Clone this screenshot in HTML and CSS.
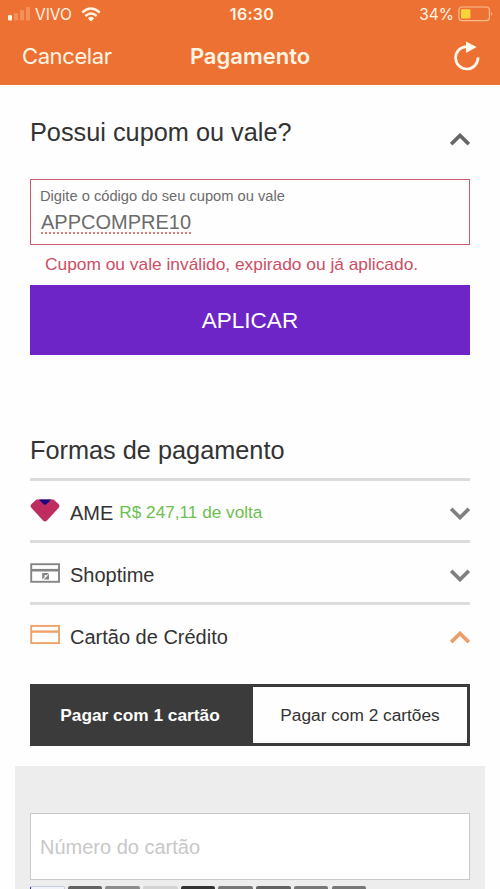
FILE: index.html
```html
<!DOCTYPE html>
<html lang="pt-BR">
<head>
<meta charset="utf-8">
<title>Pagamento</title>
<link rel="stylesheet" href="styles.css">
</head>
<body>
<header class="top">
  <div class="status">
    <div class="carrier">
      <svg width="23" height="14" viewBox="0 0 23 14"><rect x="0" y="8" width="4" height="5.5" rx="1" fill="#fff5e3"/><g fill="#f3905c"><rect x="6" y="6" width="4" height="7.5" rx="1"/><rect x="12" y="3" width="4" height="10.5" rx="1"/><rect x="18" y="0" width="4" height="13.5" rx="1"/></g></svg>
      <span class="vivo">VIVO</span>
      <svg class="wifi" width="20" height="15" viewBox="0 0 20 15"><g fill="none" stroke="#fff5e3" stroke-width="2.4"><path d="M1.2 5.6Q10-2.4 18.8 5.6"/><path d="M4.4 9Q10 4 15.6 9"/></g><path d="M6.8 11.2Q10 8.4 13.2 11.2L10 14.4Z" fill="#fff5e3"/></svg>
    </div>
    <span class="clock">16:30</span>
    <div class="battery">
      <span class="percent">34%</span>
      <svg width="36" height="16" viewBox="0 0 36 16"><rect x=".9" y="1" width="30.5" height="13.6" rx="3" fill="none" stroke="#f9bd8e" stroke-width="1.2"/><rect x="3" y="3.2" width="9.4" height="9.4" rx="1" fill="#f8d33c"/><path d="M33 5.5q2 2.3 0 4.6z" fill="#f9bd8e"/></svg>
    </div>
  </div>
  <nav class="nav">
    <span class="cancel">Cancelar</span>
    <h1 class="title">Pagamento</h1>
    <svg class="reload" width="28" height="32" viewBox="0 0 28 32"><path d="M15 6.6A11.2 11.2 0 1 0 26 17.4" fill="none" stroke="#fff8ec" stroke-width="2.7"/><path d="M14 1.4L24.6 7L14 13Z" fill="#fff8ec"/></svg>
  </nav>
</header>
<main>
  <section class="coupon">
    <div class="coupon-head">
      <h2>Possui cupom ou vale?</h2>
      <svg class="chevron" width="20" height="13" viewBox="0 0 20 13"><path d="M1.2 11.2L10 2.4L18.8 11.2" stroke="#666"/></svg>
    </div>
    <div class="field">
      <span class="label">Digite o código do seu cupom ou vale</span>
      <span class="code">APPCOMPRE10</span>
    </div>
    <p class="error">Cupom ou vale inválido, expirado ou já aplicado.</p>
    <div class="apply">APLICAR</div>
  </section>
  <section class="methods">
    <h2>Formas de pagamento</h2>
    <div class="method">
      <svg class="gem" width="30" height="24" viewBox="0 0 30 24"><path d="M6.5 .5H23.5L28.5 5Q30.3 7 28.5 9L17 21.5Q15 23.6 13 21.5L1.5 9Q-.3 7 1.5 5Z" fill="#bf2c60"/><path d="M8.8 .5H21.2L16.6 5Q15 6.5 13.4 5Z" fill="#18077f"/></svg>
      <span class="name">AME</span><span class="cashback">R$ 247,11 de volta</span>
      <svg class="chevron" width="20" height="13" viewBox="0 0 20 13"><path d="M1.2 1.8L10 10.6L18.8 1.8" stroke="#808080"/></svg>
    </div>
    <div class="method">
      <svg class="card" width="30" height="24" viewBox="0 0 30 24"><g fill="none" stroke="#858585"><rect x="1.2" y="2.2" width="27.8" height="17.6" stroke-width="1.9"/><path d="M1 8.2H29" stroke-width="2.6"/></g><path d="M12.2 11h6.8l-6.8 6.6zM19 12v5.4H13.8z" fill="#858585"/><circle cx="15.5" cy="14" r="1.1" fill="#fff"/></svg>
      <span class="name">Shoptime</span>
      <svg class="chevron" width="20" height="13" viewBox="0 0 20 13"><path d="M1.2 1.8L10 10.6L18.8 1.8" stroke="#808080"/></svg>
    </div>
    <div class="method">
      <svg class="card" width="30" height="24" viewBox="0 0 30 24"><g fill="none" stroke="#eea269"><rect x="1.2" y="1.9" width="27.8" height="17.2" stroke-width="1.9"/><path d="M1 7.6H29" stroke-width="2.4"/></g></svg>
      <span class="name">Cartão de Crédito</span>
      <svg class="chevron" width="20" height="13" viewBox="0 0 20 13"><path d="M1.2 11.2L10 2.4L18.8 11.2" stroke="#eb9d68"/></svg>
    </div>
    <div class="tabs"><div class="tab active">Pagar com 1 cartão</div><div class="tab">Pagar com 2 cartões</div></div>
  </section>
  <section class="card-form">
    <div class="number">Número do cartão</div>
    <div class="brands"><i class="brand blue"></i><i class="brand dark"></i><i class="brand mid"></i><i class="brand pale"></i><i class="brand black"></i><i class="brand"></i><i class="brand dark"></i><i class="brand"></i><i class="brand"></i></div>
  </section>
</main>
</body>
</html>
```
FILE: styles.css
```css
* { box-sizing: border-box; }
body {
  margin: 0;
  height: 889px;
  overflow: hidden;
  background: #fefefe;
  color: #333;
  font-family: "Liberation Sans", Arial, sans-serif;
}
h1, h2, p { margin: 0; font-weight: 400; }
svg { display: block; flex: none; }
.top {
  height: 85px;
  background: #ee7134;
  color: #fff5e3;
  font-family: Inter, Roboto, sans-serif;
}
.status {
  display: grid;
  grid-template-columns: 1fr auto 1fr;
  align-items: center;
  height: 28px;
  padding: 0 6px 0 8px;
}
.carrier, .battery { display: flex; align-items: center; }
.vivo { margin-left: 4px; font-size: 15.5px; letter-spacing: 0; }
.wifi { margin-left: 9px; }
.clock { margin-left: 2px; font-size: 16px; font-weight: 600; letter-spacing: .3px; }
.battery { justify-content: flex-end; gap: 4px; }
.percent { font-size: 15.5px; }
.nav {
  display: grid;
  grid-template-columns: 1fr auto 1fr;
  align-items: center;
  height: 56px;
  padding: 0 20px 0 22px;
}
.cancel { font-size: 22px; letter-spacing: -.4px; }
.title { margin-left: -2px; font-size: 22px; font-weight: 600; }
.reload { justify-self: end; }
.coupon { padding: 30px 30px 0; }
.coupon-head {
  display: flex;
  justify-content: space-between;
  height: 64px;
}
h2 { font-size: 25.3px; line-height: 34px; }
.coupon-head .chevron { margin-top: 18px; }
.chevron path { fill: none; stroke-width: 3.6; }
.field {
  display: flex;
  flex-direction: column;
  align-items: flex-start;
  height: 66px;
  padding: 7px 9px 0;
  border: 1.5px solid #cc5b70;
  color: #6c6c6c;
}
.label { font-size: 14.7px; line-height: 18px; }
.code {
  margin: 5px 0 0 1px;
  height: 24px;
  font-size: 20px;
  line-height: 24px;
  border-bottom: 2px dotted #df7b76;
}
.error {
  height: 40px;
  padding-left: 15px;
  color: #ce4d65;
  font-size: 17.35px;
  line-height: 39px;
}
.apply {
  height: 70px;
  background: #6d25c7;
  color: #fff;
  font-size: 22.5px;
  line-height: 71px;
  text-align: center;
}
.methods { padding: 78px 30px 0; }
.methods h2 { height: 45px; line-height: 35px; }
.method {
  display: flex;
  align-items: center;
  height: 62px;
  padding-top: 3px;
  border-top: 3px solid #dcdcdc;
}
.gem { margin-top: -2px; }
.name { margin-left: 10px; padding-top: 3px; font-size: 20px; }
.cashback { margin-left: 6px; color: #6cc04f; font-size: 17.2px; }
.method .chevron { margin: 2px 0 0 auto; }
.tabs {
  display: flex;
  height: 62px;
  margin-top: 20px;
  border: 3px solid #3b3b3b;
}
.tab { flex: 1; font-size: 17.3px; line-height: 57px; text-align: center; }
.active {
  flex: 0 0 220px;
  padding-right: 6px;
  background: #3b3b3b;
  color: #fff;
  font-weight: 700;
}
.card-form {
  height: 140px;
  margin: 20px 15px 0;
  padding: 47px 15px 0;
  background: #ededed;
}
.number {
  height: 67px;
  padding-left: 9px;
  border: 1px solid #c9c9c9;
  background: #fff;
  color: #c8c8c8;
  font-size: 20px;
  line-height: 67px;
}
.brands { display: flex; gap: 3.1px; margin-top: 6px; }
.brand { width: 34.6px; height: 22px; border-radius: 2px; background: #777; }
.blue { border: 1px solid #c6c9e2; border-left-color: #26268a; background: #f2f3f8; }
.dark { background: #626262; }
.mid { background: #8c8c8c; }
.pale { background: #d3d3d3; }
.black { background: #333; }
```
